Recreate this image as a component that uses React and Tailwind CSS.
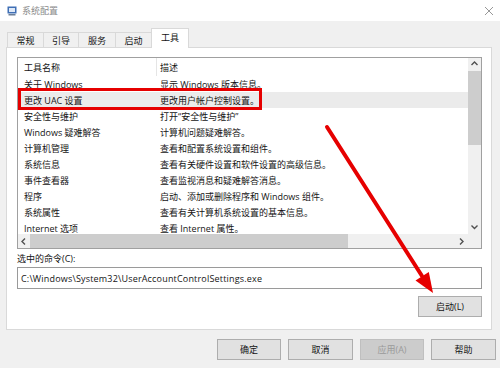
import React from "react";

const rows = [
  ["关于 Windows", "显示 Windows 版本信息。"],
  ["更改 UAC 设置", "更改用户帐户控制设置。"],
  ["安全性与维护", "打开“安全性与维护”"],
  ["Windows 疑难解答", "计算机问题疑难解答。"],
  ["计算机管理", "查看和配置系统设置和组件。"],
  ["系统信息", "查看有关硬件设置和软件设置的高级信息。"],
  ["事件查看器", "查看监视消息和疑难解答消息。"],
  ["程序", "启动、添加或删除程序和 Windows 组件。"],
  ["系统属性", "查看有关计算机系统设置的基本信息。"],
  ["Internet 选项", "查看 Internet 属性。"],
];

const tabs = [
  ["常规", "w-[36px]"],
  ["引导", "w-[35px]"],
  ["服务", "w-[37px]"],
  ["启动", "w-[36px]"],
];

function Chevron({ dir }) {
  const d = {
    up: "M1.5 5 L4.5 2 L7.5 5",
    down: "M1.5 2.5 L4.5 5.5 L7.5 2.5",
    left: "M5 1.5 L2 4.5 L5 7.5",
    right: "M3 1.5 L6 4.5 L3 7.5",
  }[dir];
  return (
    <svg width="9" height="9" viewBox="0 0 9 9">
      <path d={d} fill="none" stroke="#505050" strokeWidth="1.4" />
    </svg>
  );
}

export default function App() {
  return (
    <div className="relative w-[500px] h-[368px] overflow-hidden bg-[#f0f0f0] text-[9px] leading-none text-[#141414] font-['Open_Sans','Noto_Sans_CJK_SC',sans-serif] flex flex-col">
      {/* Title bar */}
      <div className="h-[21px] bg-white flex items-center pl-[7px] pr-[6px] shrink-0">
        <svg width="10" height="10" viewBox="0 0 10 10" className="shrink-0">
          <rect x="0.5" y="0.5" width="9" height="7" fill="#3f6fb5" />
          <rect x="2" y="2" width="6" height="4" fill="#dfe9f7" />
          <rect x="1.5" y="8" width="7" height="1.5" fill="#6b7f99" />
        </svg>
        <span className="ml-[5px] text-[#8a8a8a]">系统配置</span>
        <svg width="10" height="10" viewBox="0 0 10 10" className="ml-auto">
          <path d="M1 1 L9 9 M9 1 L1 9" stroke="#8c8c8c" strokeWidth="0.9" />
        </svg>
      </div>

      {/* Tabs */}
      <div className="h-[26px] flex items-end pl-[7px] shrink-0">
        {tabs.map(([t, w]) => (
          <div
            key={t}
            className={`${w} h-[15px] border border-b-0 border-r-0 border-[#d9d9d9] flex items-center justify-center pt-[1px]`}
          >
            {t}
          </div>
        ))}
        <div className="w-[38px] h-[20px] -mb-[1px] relative z-10 bg-white border border-b-0 border-[#d9d9d9] flex items-center justify-center pb-[2px]">
          工具
        </div>
      </div>

      {/* Panel */}
      <div className="ml-[6px] mr-[8px] h-[283px] bg-white border border-[#d9d9d9] pl-[10px] pr-[9px] pt-[9px] flex flex-col shrink-0">
        {/* List box */}
        <div className="w-[465px] h-[192px] border border-[#a0a0a0] flex flex-col">
          <div className="flex h-[176px]">
            <div className="w-[450px] flex flex-col overflow-hidden">
              <div className="h-[18px] flex items-center shrink-0">
                <div className="w-[139px] h-full flex items-center pl-[6px] border-r border-[#e5e5e5]">工具名称</div>
                <div className="pl-[3px]">描述</div>
              </div>
              {rows.map(([a, b], i) => (
                <div
                  key={a}
                  className={`h-[16px] flex items-center shrink-0 ${i === 1 ? "bg-[#ebebeb]" : ""}`}
                >
                  <div className="w-[139px] pl-[6px] whitespace-nowrap">{a}</div>
                  <div className="pl-[3px] whitespace-nowrap">{b}</div>
                </div>
              ))}
            </div>
            {/* Vertical scrollbar */}
            <div className="w-[13px] bg-[#f0f0f0] flex flex-col">
              <div className="h-[13px] flex items-center justify-center">
                <Chevron dir="up" />
              </div>
              <div className="h-[74px] bg-[#cdcdcd]" />
              <div className="flex-1" />
              <div className="h-[14px] flex items-center justify-center">
                <Chevron dir="down" />
              </div>
            </div>
          </div>
          {/* Horizontal scrollbar */}
          <div className="flex h-[14px]">
            <div className="w-[450px] bg-[#f0f0f0] flex items-center">
              <div className="w-[12px] flex items-center justify-center">
                <Chevron dir="left" />
              </div>
              <div className="w-[318px] h-full bg-[#cdcdcd]" />
              <div className="flex-1" />
              <div className="w-[14px] flex items-center justify-center">
                <Chevron dir="right" />
              </div>
            </div>
            <div className="w-[13px] bg-[#f0f0f0]" />
          </div>
        </div>

        <div className="h-[18px] flex items-center pt-[1px]">选中的命令(C):</div>
        <div className="w-[465px] h-[22px] border border-[#9a9a9a] flex items-center pl-[3px] whitespace-nowrap tracking-[0.18px]">
          C:\Windows\System32\UserAccountControlSettings.exe
        </div>
        <div className="flex justify-end mt-[7px]">
          <button className="w-[64px] h-[21px] bg-[#e1e1e1] border border-[#adadad] flex items-center justify-center">
            启动(L)
          </button>
        </div>
      </div>

      {/* Bottom buttons */}
      <div className="flex justify-end gap-[7px] pr-[4px] pt-[9px]">
        <button className="w-[64px] h-[21px] bg-[#e1e1e1] border border-[#adadad] flex items-center justify-center">确定</button>
        <button className="w-[65px] h-[21px] bg-[#e1e1e1] border border-[#adadad] flex items-center justify-center">取消</button>
        <button className="w-[64px] h-[21px] bg-[#cccccc] border border-[#bfbfbf] text-[#9a9a9a] flex items-center justify-center">应用(A)</button>
        <button className="w-[65px] h-[21px] bg-[#e1e1e1] border border-[#adadad] flex items-center justify-center">帮助</button>
      </div>

      {/* Annotations */}
      <div className="absolute left-[18px] top-[88px] w-[244px] h-[22px] border-[3px] border-[#e60000]" />
      <svg className="absolute left-0 top-0 pointer-events-none" width="500" height="368">
        <line x1="327" y1="127" x2="422" y2="276" stroke="#e60000" strokeWidth="4" strokeLinecap="round" />
        <polygon points="433,293 415.5,280.5 428.8,272" fill="#e60000" />
      </svg>
    </div>
  );
}
